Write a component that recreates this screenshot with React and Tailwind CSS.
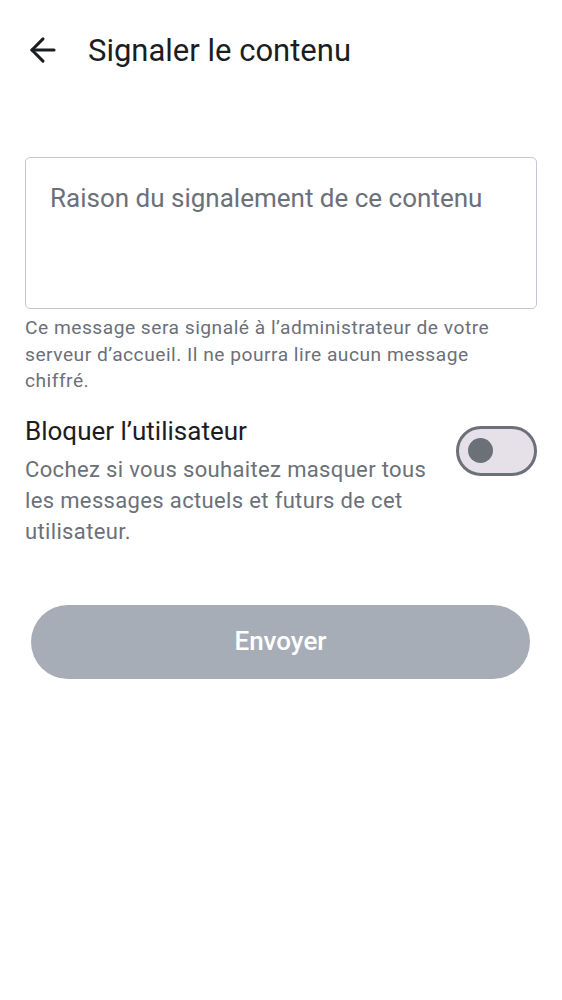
import { ArrowLeft } from "lucide-react";

export default function App() {
  return (
    <div className="min-h-[1000px] w-[562px] bg-white font-['Roboto',sans-serif] text-[#1b1d22]">
      {/* Top bar */}
      <header className="flex h-[100px] items-center pl-[24px]">
        <ArrowLeft className="h-[38px] w-[38px]" strokeWidth={1.9} />
        <h1 className="ml-[26px] text-[31px] leading-none">Signaler le contenu</h1>
      </header>

      <main className="px-[25px] pt-[57px]">
        {/* Reason field */}
        <div className="h-[152px] rounded-[5px] border-[1.5px] border-[#c3c7ce] px-[24px] pt-[24px]">
          <p className="text-[26px] leading-[32px] text-[#6b7079]">
            Raison du signalement de ce contenu
          </p>
        </div>
        <p className="mt-[6px] pr-[20px] text-[19.2px] leading-[26.5px] tracking-[0.5px] text-[#6b7079]">
          Ce message sera signalé à l’administrateur de votre serveur d’accueil. Il ne pourra lire aucun
          message chiffré.
        </p>

        {/* Block user */}
        <div className="mt-[20px] flex items-start justify-between">
          <div className="w-[410px]">
            <p className="text-[26px] leading-[32px]">Bloquer l’utilisateur</p>
            <p className="mt-[7px] text-[22px] leading-[31px] tracking-[0.35px] text-[#6b7079]">
              Cochez si vous souhaitez masquer tous les messages actuels et futurs de cet utilisateur.
            </p>
          </div>
          <div className="mt-[11px] flex h-[50px] w-[81px] items-center rounded-full border-[3px] border-[#6b7079] bg-[#e6e0e9] pl-[9px]">
            <div className="h-[25px] w-[25px] rounded-full bg-[#6b7079]" />
          </div>
        </div>

        {/* Submit */}
        <button className="mx-[6px] mt-[58px] flex h-[74px] w-[499px] items-center justify-center rounded-full bg-[#a7adb7] text-[26px] font-medium text-white">
          Envoyer
        </button>
      </main>
    </div>
  );
}
